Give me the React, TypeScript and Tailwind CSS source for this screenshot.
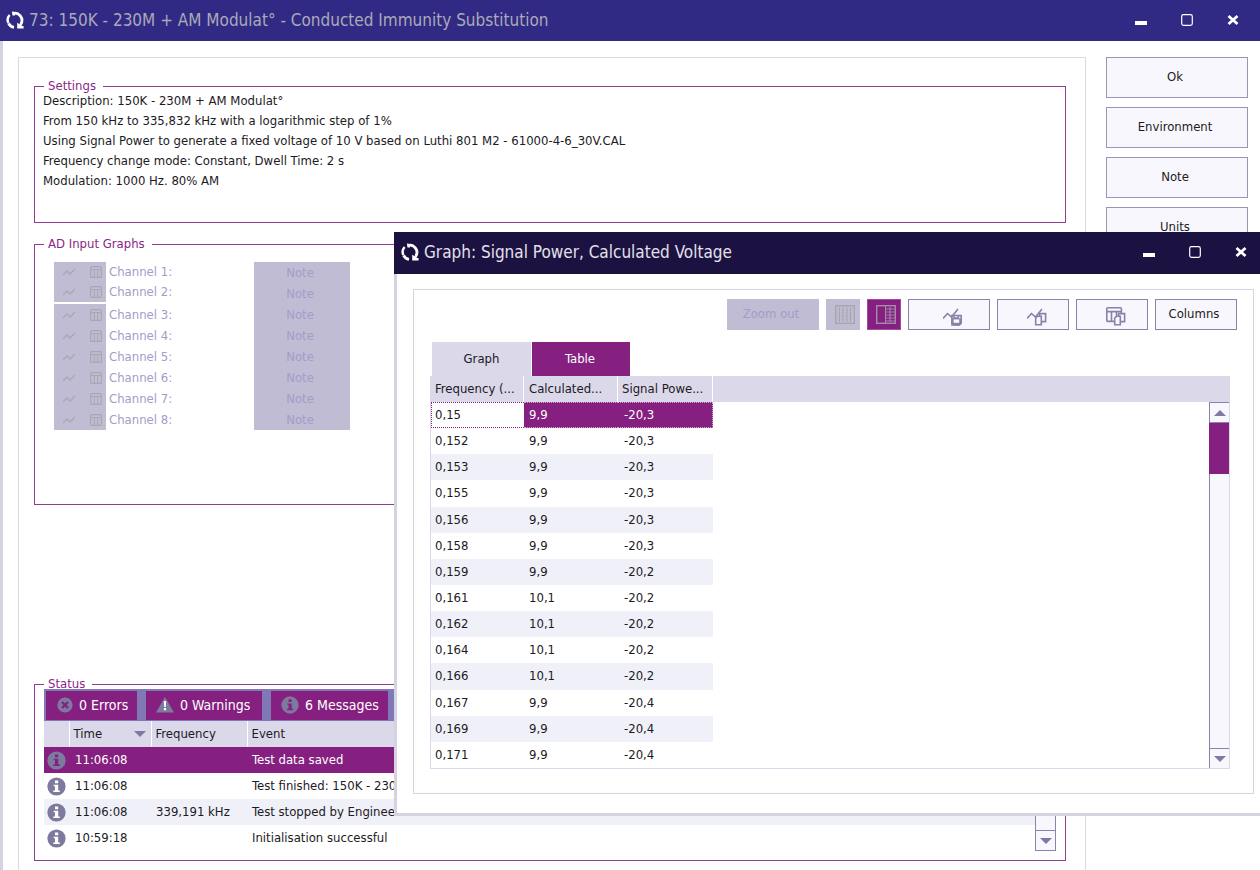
import React from 'react';

const channels = [1, 2, 3, 4, 5, 6, 7, 8];

const readings = [
  ['0,15', '9,9', '-20,3'],
  ['0,152', '9,9', '-20,3'],
  ['0,153', '9,9', '-20,3'],
  ['0,155', '9,9', '-20,3'],
  ['0,156', '9,9', '-20,3'],
  ['0,158', '9,9', '-20,3'],
  ['0,159', '9,9', '-20,2'],
  ['0,161', '10,1', '-20,2'],
  ['0,162', '10,1', '-20,2'],
  ['0,164', '10,1', '-20,2'],
  ['0,166', '10,1', '-20,2'],
  ['0,167', '9,9', '-20,4'],
  ['0,169', '9,9', '-20,4'],
  ['0,171', '9,9', '-20,4'],
];

const events = [
  { time: '11:06:08', frequency: '', event: 'Test data saved' },
  { time: '11:06:08', frequency: '', event: 'Test finished: 150K - 230M + AM Modulat°' },
  { time: '11:06:08', frequency: '339,191 kHz', event: 'Test stopped by Engineer.' },
  { time: '10:59:18', frequency: '', event: 'Initialisation successful' },
];

function Logo() {
  return (
    <svg className="h-5 w-5 shrink-0" viewBox="0 0 20 20" fill="none" stroke="white">
      <path d="M7.4 3.6A7.2 7.2 0 0 1 15.8 14.2" strokeWidth="2.8" />
      <path d="M4.6 5A7.2 7.2 0 0 0 3.4 13" strokeWidth="2.4" />
      <path d="M3.6 13.4A7.2 7.2 0 0 0 9 17.3" strokeWidth="2.8" />
      <path d="M7.2 1.2L10 2.2v3.4L7.6 5.4z" fill="white" stroke="none" />
      <path d="M12.2 12.8l2.6 1.4 2.2-.8-.4 2.4 2 .4v2.4h-6.4z" fill="white" stroke="none" />
    </svg>
  );
}

function TitleBar({ title, className, titleClass }: { title: string; className: string; titleClass: string }) {
  return (
    <header className={`flex items-center pb-[2px] ${className}`}>
      <Logo />
      <h1 className={`ml-1 flex-1 whitespace-nowrap text-[17px] leading-6 ${titleClass}`}>{title}</h1>
      <div className="flex gap-2 text-white">
        <button type="button" aria-label="Minimize" className="flex h-8 w-[38px] items-center justify-center">
          <svg className="h-3 w-3" viewBox="0 0 12 12" fill="currentColor">
            <path d="M0 7h12v4H0z" />
          </svg>
        </button>
        <button type="button" aria-label="Maximize" className="flex h-8 w-[38px] items-center justify-center">
          <svg className="h-3 w-3" viewBox="0 0 12 12" fill="none" stroke="currentColor">
            <rect x="0.7" y="0.7" width="10.6" height="10.6" rx="1.8" strokeWidth="1.2" />
          </svg>
        </button>
        <button type="button" aria-label="Close" className="flex h-8 w-[38px] items-center justify-center">
          <svg className="h-3 w-3" viewBox="0 0 12 12" fill="none" stroke="currentColor">
            <path d="M1.5 2l9 8M10.5 2l-9 8" strokeWidth="2.8" />
          </svg>
        </button>
      </div>
    </header>
  );
}

function LineIcon() {
  return (
    <svg className="h-3 w-3" viewBox="0 0 12 12" fill="none" stroke="currentColor" strokeWidth="1.3">
      <path d="M0 9l4-4 3 3 5-5" />
    </svg>
  );
}

function TableIcon() {
  return (
    <svg className="h-3 w-3" viewBox="0 0 12 12" fill="none" stroke="currentColor">
      <rect x="0.6" y="0.6" width="10.8" height="10.8" rx="1" strokeWidth="1.2" />
      <path d="M1 3.5h10M4.3 4v7M7.7 4v7" strokeWidth="1.1" />
    </svg>
  );
}

function InfoIcon({ className, hole }: { className: string; hole: string }) {
  return (
    <svg className={className} viewBox="0 0 20 20">
      <circle cx="10" cy="10" r="9.6" fill="#7c7a9e" />
      <path d="M8.4 3.6h3.4v3H8.4zM7 8.2h4.8v6h1.7v1.6H6.6v-1.6h1.8V9.8H7z" fill={hole} />
    </svg>
  );
}

function Arrow({ up = false }: { up?: boolean }) {
  return (
    <svg className="h-[6px] w-[12px]" viewBox="0 0 12 6" fill="#7f7aa2">
      <path d={up ? 'M0 6l6-6 6 6z' : 'M0 0h12L6 6z'} />
    </svg>
  );
}

function GroupBox({ title, className, children }: { title: string; className: string; children: React.ReactNode }) {
  return (
    <fieldset className={`min-w-0 border border-[#943a92] ${className}`}>
      <legend className="ml-[9px] pr-[7px] pl-1 leading-[10px] text-[#8a2688]">{title}</legend>
      {children}
    </fieldset>
  );
}

function ChannelRow({ channel, height }: { channel: number; height: string }) {
  return (
    <div className={`flex items-center ${height}`}>
      <div className="flex h-full w-[52px] items-center gap-[15px] bg-[#c0bcd3] pl-[9px] text-[#a9a7b4]">
        <button type="button" disabled aria-label={`Graph channel ${channel}`}><LineIcon /></button>
        <button type="button" disabled aria-label={`Table channel ${channel}`}><TableIcon /></button>
      </div>
      <span className="ml-[3px] text-[#a69bc9]">Channel {channel}:</span>
    </div>
  );
}

function StatusPanel() {
  return (
    <div className="mr-[9px] ml-[9px]">
      <div className="flex h-8 items-center gap-[9px] bg-[#8179b5] pl-[2px] text-[14px] text-white">
        <button type="button" className="flex h-[29px] w-[91px] items-center gap-[6px] bg-[#852080] pl-[11px] whitespace-nowrap">
          <svg className="h-4 w-4 shrink-0" viewBox="0 0 16 16">
            <circle cx="8" cy="8" r="7.6" fill="#7c7a9e" />
            <path d="M5 5l6 6M11 5l-6 6" stroke="#852080" strokeWidth="2.4" />
          </svg>
          0 Errors
        </button>
        <button type="button" className="flex h-[29px] w-[116px] items-center gap-[6px] bg-[#852080] pl-[10px] whitespace-nowrap">
          <svg className="h-4 w-[18px] shrink-0" viewBox="0 0 18 16">
            <path d="M9 0l9 15.5H0z" fill="#7c7a9e" />
            <path d="M7.8 4h2.4l-.4 6H8.2zM7.9 11h2.2v2.2H7.9z" fill="#fff" />
          </svg>
          0 Warnings
        </button>
        <button type="button" className="flex h-[29px] w-[117px] items-center gap-[6px] bg-[#852080] pl-[10px] whitespace-nowrap">
          <InfoIcon className="h-[18px] w-[18px] shrink-0" hole="#852080" />
          6 Messages
        </button>
      </div>
      <div className="flex">
        <table className="flex-1 table-fixed border-collapse text-left">
          <thead className="bg-[#dbd8ea]">
            <tr className="h-[26px]">
              <th className="w-[25px]" />
              <th className="w-[82px] border-l border-white pl-1 font-normal">
                <span className="flex items-center justify-between pr-[5px]">Time<Arrow /></span>
              </th>
              <th className="w-[96px] border-l border-white pl-1 font-normal">Frequency</th>
              <th className="border-l border-white pl-1 font-normal">Event</th>
            </tr>
          </thead>
          <tbody>
            {events.map((row, i) => (
              <tr
                key={i}
                className={`h-[26px] ${i === 0 ? 'bg-[#852080] text-white' : i === 2 ? 'bg-[#eff0f8]' : 'bg-white'}`}
              >
                <td className="pl-[3px]">
                  <InfoIcon className="h-[19px] w-[19px]" hole={i === 0 ? '#852080' : '#fff'} />
                </td>
                <td className="pl-[6px]">{row.time}</td>
                <td className="pl-[5px] whitespace-nowrap">{row.frequency}</td>
                <td className="pl-[5px] whitespace-nowrap">{row.event}</td>
              </tr>
            ))}
          </tbody>
        </table>
        <div className="flex w-[21px] flex-col justify-end border border-[#8a84ab] bg-[#f8f7fd]">
          <button type="button" aria-label="Scroll events down" className="flex h-5 items-center justify-center border-t border-[#8a84ab]">
            <Arrow />
          </button>
        </div>
      </div>
    </div>
  );
}

function GraphIcon({ kind }: { kind: 'save' | 'copy' }) {
  return (
    <svg className="mt-1 ml-2 h-5 w-5" viewBox="0 0 20 20" fill="none" stroke="currentColor" strokeWidth="1.6">
      <path d="M0 11.5l4.5-5 4 3.5L15 2" />
      {kind === 'save' ? (
        <>
          <path d="M9 8.5h9.2v7.6l-2 1.9H9z" fill="#f8f7fd" />
          <path d="M8.2 11.6h10.8v4.4l-2 2.6h-6.8l-2-2z" fill="currentColor" stroke="none" />
          <path d="M10.6 12.4h5.6v3.4h-5.6z" fill="#f8f7fd" stroke="none" />
          <path d="M11 8.5v2.6h4.4V8.5" />
        </>
      ) : (
        <CopyPages />
      )}
    </svg>
  );
}

function CopyPages() {
  return (
    <>
      <path d="M12.6 6.6h6v8h-6z" fill="#f8f7fd" />
      <path d="M8.7 11l1.8-1.8h3.8v8.6H8.7z" fill="#f8f7fd" />
    </>
  );
}

function Toolbar() {
  const outlined = 'flex h-[31px] items-center justify-center border border-[#8a84ab] bg-[#f8f7fd] text-[#8782a8]';
  return (
    <div className="flex justify-end gap-[7px]">
      <button type="button" disabled className="h-[31px] w-[92px] bg-[#c0bcd3] pr-1 pb-px text-[#a69bc9]">Zoom out</button>
      <button type="button" disabled aria-label="Single pane" className="flex h-[31px] w-[34px] items-center justify-center bg-[#c0bcd3] pl-1">
        <svg className="h-[19px] w-5" viewBox="0 0 20 19" fill="none" stroke="#a7a5ad">
          <rect x="0.7" y="0.7" width="18.6" height="17.6" strokeWidth="1.4" />
          <path d="M4.5 2v15M8 2v15M12 2v15M15.5 2v15" />
          <path d="M2 5h16M2 8h16M2 11h16M2 14h16" strokeDasharray="1 1" strokeWidth="0.6" />
        </svg>
      </button>
      <button type="button" aria-label="Split pane" className="flex h-[31px] w-[34px] items-center justify-center border border-[#a24c9f] bg-[#852080] pl-1">
        <svg className="h-[19px] w-5" viewBox="0 0 20 19" fill="none" stroke="#a58bab">
          <rect x="0.7" y="0.7" width="18.6" height="17.6" strokeWidth="1.4" />
          <path d="M9.5 1v17M14 2v15" />
          <path d="M10 4h9M10 7h9M10 10h9M10 13h9M10 16h9" strokeWidth="0.9" />
        </svg>
      </button>
      <button type="button" aria-label="Save graph" className={`w-[82px] ${outlined}`}><GraphIcon kind="save" /></button>
      <button type="button" aria-label="Copy graph" className={`w-[72px] ${outlined}`}><GraphIcon kind="copy" /></button>
      <button type="button" aria-label="Copy table" className={`w-[72px] ${outlined}`}>
        <svg className="mt-1 ml-2 h-5 w-5" viewBox="0 0 20 20" fill="none" stroke="currentColor" strokeWidth="1.6">
          <rect x="0.8" y="0.8" width="14.6" height="13.6" rx="1" />
          <path d="M1 4.6h14.5M5.5 5v9.5M10.5 5v9.5" />
          <CopyPages />
        </svg>
      </button>
      <button type="button" className="h-[31px] w-[82px] border border-[#8a84ab] bg-[#f8f7fd] pr-1 pb-px">Columns</button>
    </div>
  );
}

function ReadingsTable() {
  return (
    <div className="flex h-[393px] border border-t-0 border-[#dbd8ea]">
      <table className="h-full flex-1 table-fixed border-separate border-spacing-0 text-left whitespace-nowrap">
        <thead>
          <tr className="h-[26px] bg-[#dbd8ea]">
            <th className="w-[93px] border-r border-white pl-1 font-normal">Frequency (...</th>
            <th className="w-[94px] border-r border-white pl-[5px] font-normal">Calculated...</th>
            <th className="w-[95px] border-r border-white pl-1 font-normal">Signal Powe...</th>
            <th />
          </tr>
        </thead>
        <tbody>
          {readings.map(([frequency, voltage, power], i) => {
            if (i === 0) {
              return (
                <tr key={frequency}>
                  <td className="border border-r-0 border-dotted border-[#852080] pl-[3px]">{frequency}</td>
                  <td className="border-y border-dotted border-[#d9a5d6] bg-[#852080] pl-[5px] text-white">{voltage}</td>
                  <td className="border border-l-0 border-dotted border-[#d9a5d6] bg-[#852080] pl-[6px] text-white">{power}</td>
                  <td />
                </tr>
              );
            }
            const fill = i % 2 === 0 ? 'bg-[#eff0f8]' : 'bg-white';
            return (
              <tr key={frequency}>
                <td className={`border-y border-transparent pl-1 ${fill}`}>{frequency}</td>
                <td className={`border-y border-transparent pl-[5px] ${fill}`}>{voltage}</td>
                <td className={`border-y border-transparent pl-[6px] ${fill}`}>{power}</td>
                <td />
              </tr>
            );
          })}
        </tbody>
      </table>
      <div className="flex w-5 flex-col">
        <div className="h-[26px] bg-[#dbd8ea]" />
        <div className="flex flex-1 flex-col border-l border-[#8a84ab] bg-[#f8f7fd]">
          <button type="button" aria-label="Scroll up" className="flex h-[21px] items-center justify-center border-y border-[#8a84ab]">
            <Arrow up />
          </button>
          <div className="-ml-px h-[51px] bg-[#852080]" />
          <div className="flex-1" />
          <button type="button" aria-label="Scroll down" className="flex h-5 items-center justify-center border-t border-[#8a84ab]">
            <Arrow />
          </button>
        </div>
      </div>
    </div>
  );
}

function GraphWindow() {
  return (
    <section className="absolute top-[232px] right-0 left-[394px] bg-white">
      <TitleBar title="Graph: Signal Power, Calculated Voltage" className="h-[42px] bg-[#1c1242] pl-[6px]" titleClass="text-[#e3e1ea]" />
      <div className="border-b-[3px] border-l-[3px] border-[#d5d3e1] pt-[15px] pr-[6px] pb-[19px] pl-4">
        <div className="border border-[#d5d3e1] pt-[9px] pr-4 pb-6 pl-4">
          <Toolbar />
          <div className="mt-3 ml-[2px] flex gap-px">
            <button type="button" className="h-[34px] w-[99px] bg-[#dbd8ea] pb-px">Graph</button>
            <button type="button" className="h-[34px] w-[98px] bg-[#852080] pr-[2px] pb-px text-white">Table</button>
          </div>
          <div className="mr-[7px]">
            <ReadingsTable />
          </div>
        </div>
      </div>
    </section>
  );
}

export default function App() {
  return (
    <div className="relative h-screen overflow-hidden bg-white font-['DejaVu_Sans_Condensed','DejaVu_Sans',sans-serif] text-[13px] leading-5 text-[#1c1a24]">
      <TitleBar title="73: 150K - 230M + AM Modulat° - Conducted Immunity Substitution" className="h-[41px] bg-[#312a85] pr-2 pl-[5px]" titleClass="text-[#aaa9b8]" />
      <main className="flex gap-5 border-l-[3px] border-[#d5d3e1] pt-4 pr-3 pl-[15px]">
        <div className="flex-1 border border-[#dbd9e6] pt-[23px] pr-[19px] pb-10 pl-[15px]">
          <GroupBox title="Settings" className="h-[142px]">
            <div className="pl-2">
              <p>Description: 150K - 230M + AM Modulat°</p>
              <p>From 150 kHz to 335,832 kHz with a logarithmic step of 1%</p>
              <p>Using Signal Power to generate a fixed voltage of 10 V based on Luthi 801 M2 - 61000-4-6_30V.CAL</p>
              <p>Frequency change mode: Constant, Dwell Time: 2 s</p>
              <p>Modulation: 1000 Hz. 80% AM</p>
            </div>
          </GroupBox>
          <GroupBox title="AD Input Graphs" className="mt-4 h-[266px]">
            <div className="mt-[13px] ml-[19px] flex">
              <div className="w-[200px]">
                {channels.slice(0, 2).map((n) => (
                  <ChannelRow key={n} channel={n} height="h-5" />
                ))}
                <div className="mt-[2px]">
                  {channels.slice(2).map((n) => (
                    <ChannelRow key={n} channel={n} height="h-[21px]" />
                  ))}
                </div>
              </div>
              <div className="flex w-[96px] flex-col bg-[#c0bcd3] text-[#a69bc9]">
                {channels.map((n) => (
                  <button key={n} type="button" disabled className="h-[21px] pr-1">Note</button>
                ))}
              </div>
            </div>
          </GroupBox>
          <GroupBox title="Status" className="mt-[174px] h-[182px]">
            <StatusPanel />
          </GroupBox>
        </div>
        <nav className="flex w-[142px] flex-col gap-[9px]">
          {['Ok', 'Environment', 'Note', 'Units'].map((label) => (
            <button key={label} type="button" className="h-[41px] border border-[#9a95b6] bg-[#f8f7fd] pr-1 pb-[2px]">
              {label}
            </button>
          ))}
        </nav>
      </main>
      <GraphWindow />
    </div>
  );
}
